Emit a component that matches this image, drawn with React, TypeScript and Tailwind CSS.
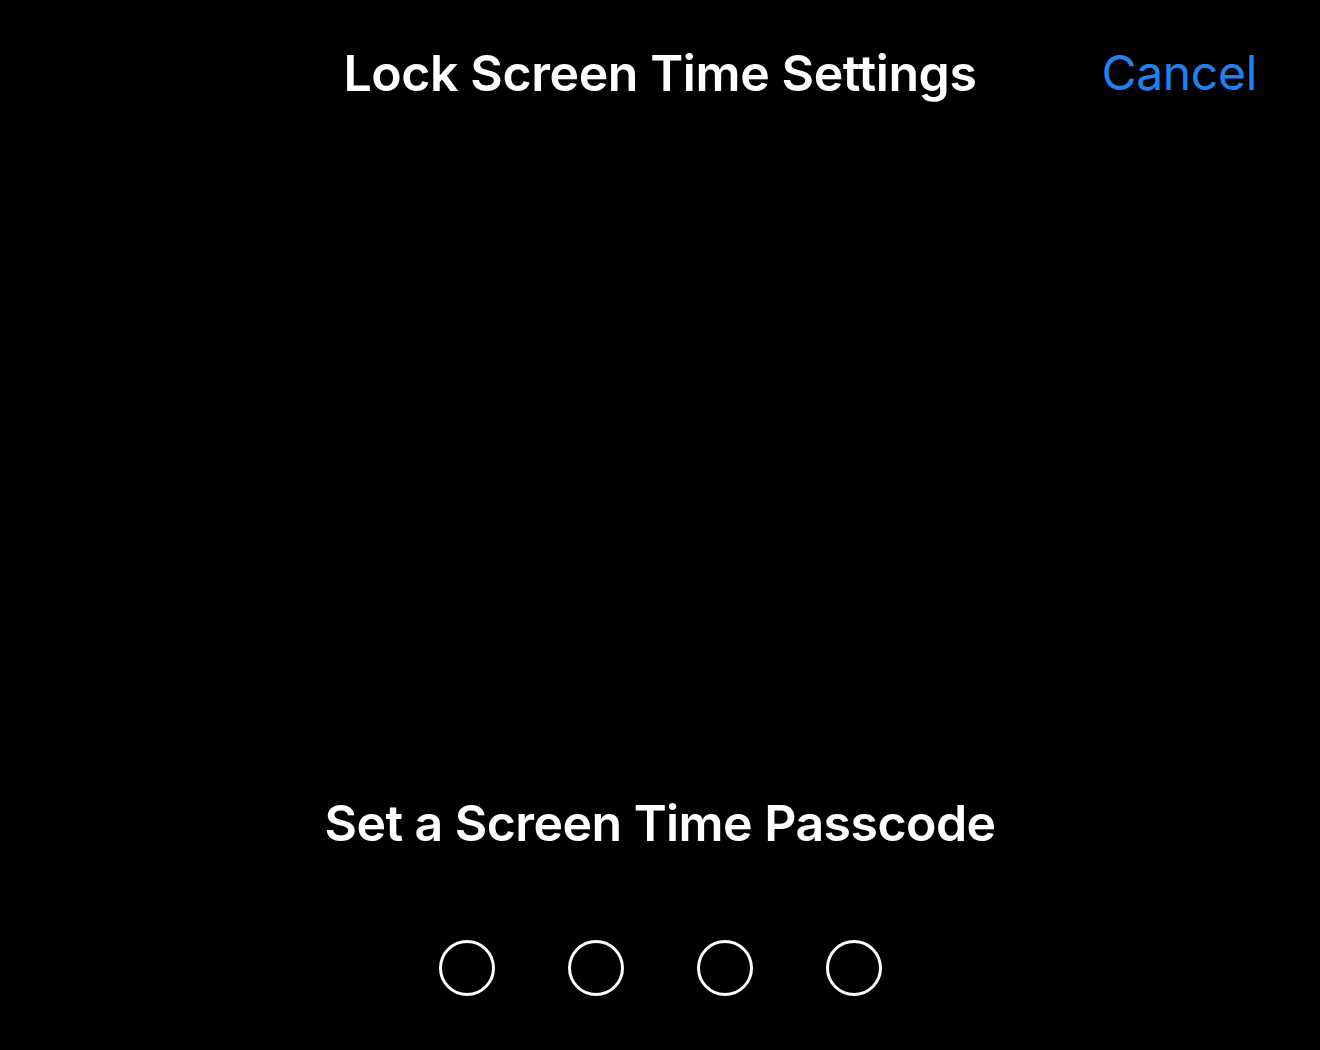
export default function App() {
  const dots = [0, 1, 2, 3];
  return (
    <div
      className="flex h-[1050px] w-full flex-col bg-black text-white"
      style={{ fontFamily: 'Inter, "Noto Sans", sans-serif' }}
    >
      <header className="grid grid-cols-[1fr_auto_1fr] items-center px-[63px] pt-[42px]">
        <div />
        <h1 className="text-[50px] leading-[62px] font-semibold tracking-[-0.4px]">
          Lock Screen Time Settings
        </h1>
        <button className="justify-self-end text-[48px] leading-[62px] font-normal text-[#1e83f0] tracking-[-0.3px]">
          Cancel
        </button>
      </header>

      <div className="flex-1" />

      <div className="flex flex-col items-center pb-[54px]">
        <p className="text-[50px] leading-[62px] font-semibold tracking-[-0.55px]">
          Set a Screen Time Passcode
        </p>
        <div className="mt-[86px] flex gap-[73px]">
          {dots.map((d) => (
            <div key={d} className="h-[56px] w-[56px] rounded-full border-[3px] border-white" />
          ))}
        </div>
      </div>
    </div>
  );
}
